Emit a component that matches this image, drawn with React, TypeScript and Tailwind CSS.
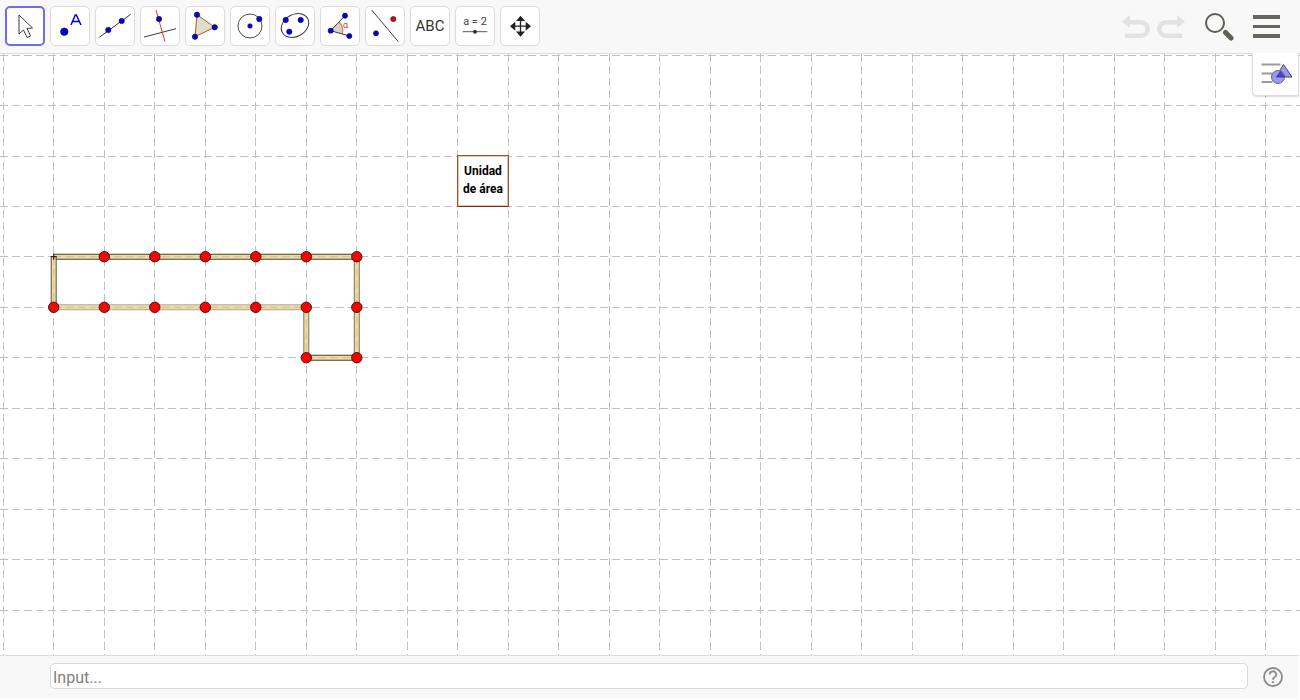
import type { ReactNode } from "react";

const FONT = "font-['Roboto','Liberation_Sans',sans-serif]";

// grid lines of the graphics view, snapped to whole pixels like the applet does
const GRID_X = Array.from({ length: 26 }, (_, i) => Math.floor(3 + i * 50.5) + 0.5);
const GRID_Y = Array.from({ length: 12 }, (_, i) => Math.floor(1.1 + i * 50.45) + 0.5);

const ROW_TOP = 202.7;
const ROW_MID = 253.3;
const ROW_LOW = 303.7;
const COLS = [53.7, 104.3, 154.8, 205.3, 255.8, 306.3, 356.8];

// red points of the match figure, in canvas coordinates
const POINTS: [number, number][] = [
  ...COLS.slice(1).map((x): [number, number] => [x, ROW_TOP]),
  ...COLS.map((x): [number, number] => [x, ROW_MID]),
  [COLS[5], ROW_LOW],
  [COLS[6], ROW_LOW],
];

const MATCHES: { x1: number; y1: number; x2: number; y2: number; edge: string }[] = [
  { x1: COLS[0], y1: ROW_TOP, x2: COLS[6], y2: ROW_TOP, edge: "#45423a" },
  { x1: COLS[0], y1: ROW_TOP, x2: COLS[0], y2: ROW_MID, edge: "#55524a" },
  { x1: COLS[0], y1: ROW_MID, x2: COLS[5], y2: ROW_MID, edge: "#a8a8a4" },
  { x1: COLS[6], y1: ROW_TOP, x2: COLS[6], y2: ROW_LOW, edge: "#77756e" },
  { x1: COLS[5], y1: ROW_MID, x2: COLS[5], y2: ROW_LOW, edge: "#77756e" },
  { x1: COLS[5], y1: ROW_LOW, x2: COLS[6], y2: ROW_LOW, edge: "#45423a" },
];

function Dot({ x, y, r = 3.5, fill = "#0000e0" }: { x: number; y: number; r?: number; fill?: string }) {
  return <circle cx={x} cy={y} r={r} fill={fill} stroke="#14143c" strokeWidth={0.6} />;
}

function ToolButton({ children, active }: { children: ReactNode; active?: boolean }) {
  return (
    <button
      className={
        active
          ? "flex h-10 w-10 items-center justify-center rounded-[5px] border-2 border-[#6c6cf5] bg-white"
          : "flex h-10 w-10 items-center justify-center rounded-[5px] border border-[#dcdcdc] bg-white"
      }
    >
      {children}
    </button>
  );
}

function Icon({ children }: { children: ReactNode }) {
  return (
    <svg width="40" height="40" viewBox="0 0 40 40" className="shrink-0">
      {children}
    </svg>
  );
}

function Toolbar() {
  return (
    <div className="flex h-[53px] shrink-0 items-start justify-between bg-[#f8f8f8] pl-[5px] pr-5 pt-1.5">
      <div className="flex gap-[5px]">
        <ToolButton active>
          <Icon>
            <path d="M14 9 L14 28 L18.5 24 L22 31.5 L25.5 30 L22 22.5 L27.5 22 Z" fill="#fff" stroke="#3c3c3c" strokeWidth={1} strokeLinejoin="round" />
          </Icon>
        </ToolButton>
        <ToolButton>
          <Icon>
            <Dot x={14.3} y={25.7} r={3.8} />
            <path d="M21 19 L25.3 9 L26.3 9 L31 19 M22.8 15.6 L29 15.6" fill="none" stroke="#0000e0" strokeWidth={1.5} />
          </Icon>
        </ToolButton>
        <ToolButton>
          <Icon>
            <path d="M4.3 31.3 L35.700 8.300" stroke="#3c3c3c" strokeWidth={1} />
            <Dot x={13.3} y={24} r={2.7} />
            <Dot x={26.7} y={15} r={2.7} />
          </Icon>
        </ToolButton>
        <ToolButton>
          <Icon>
            <path d="M4 31 L36 22.700" stroke="#3c3c3c" strokeWidth={1} />
            <path d="M16 4 L25 35.700" stroke="#f03030" strokeWidth={1} />
            <Dot x={19} y={13} r={2.7} />
          </Icon>
        </ToolButton>
        <ToolButton>
          <Icon>
            <path d="M12 8.700 L29.700 21.300 L10 30.700 Z" fill="#e2dccb" stroke="#a55a28" strokeWidth={1} />
            <Dot x={12} y={8.7} r={2.7} />
            <Dot x={29.7} y={21.3} r={2.7} />
            <Dot x={10} y={30.7} r={2.7} />
          </Icon>
        </ToolButton>
        <ToolButton>
          <Icon>
            <circle cx={20} cy={20} r={12} fill="none" stroke="#4a4a4a" strokeWidth={1} />
            <Dot x={20} y={20} r={2.3} />
            <Dot x={29.3} y={13} r={2.7} />
          </Icon>
        </ToolButton>
        <ToolButton>
          <Icon>
            <ellipse cx={20} cy={19.5} rx={14.5} ry={11} transform="rotate(-30 20 19.5)" fill="none" stroke="#3c3c3c" strokeWidth={1} />
            <Dot x={10.7} y={14} r={2.7} />
            <Dot x={25.7} y={14} r={2.7} />
            <Dot x={14.3} y={25.7} r={2.7} />
          </Icon>
        </ToolButton>
        <ToolButton>
          <Icon>
            <path d="M10.700 24.700 L19 16 A12 12 0 0 1 22.200 28 Z" fill="#d8d2c8" />
            <path d="M19 16 A12 12 0 0 1 22.200 28" fill="none" stroke="#e8705a" strokeWidth={1.2} />
            <path d="M25 9.700 L10.700 24.700 L29.300 30" fill="none" stroke="#3c3c3c" strokeWidth={1} />
            <Dot x={25} y={9.7} r={2.6} />
            <Dot x={10.7} y={24.7} r={2.6} />
            <Dot x={29.3} y={30} r={2.6} />
            <text x={23} y={22} fontSize={9} fill="#e03030" fontFamily="Roboto, sans-serif">α</text>
          </Icon>
        </ToolButton>
        <ToolButton>
          <Icon>
            <path d="M6.700 4 L33.300 35.700" stroke="#3c3c3c" strokeWidth={1} />
            <Dot x={28.3} y={13} r={2.6} fill="#e00000" />
            <Dot x={11} y={27.3} r={2.6} />
          </Icon>
        </ToolButton>
        <ToolButton>
          <span className={`${FONT} text-[15px] leading-none text-[#333]`}>ABC</span>
        </ToolButton>
        <ToolButton>
          <Icon>
            <text x={20} y={19} textAnchor="middle" fontSize={11} fill="#444" fontFamily="Roboto, sans-serif">a = 2</text>
            <path d="M7.700 25.700 L32.300 25.700" stroke="#555" strokeWidth={1} />
            <circle cx={20} cy={25.7} r={2} fill="#333" />
          </Icon>
        </ToolButton>
        <ToolButton>
          <Icon>
            <path d="M20.500 12 L20.500 28 M12 20.200 L29 20.200" stroke="#222" strokeWidth={1.3} />
            <path d="M20.500 9.700 L25 15 L16 15 Z M20.500 30.700 L25 25.400 L16 25.400 Z M10 20.200 L15.300 15.700 L15.300 24.700 Z M31 20.200 L25.700 15.700 L25.700 24.700 Z" fill="#222" />
          </Icon>
        </ToolButton>
      </div>
      <div className="flex items-start pt-[7px]">
        <svg width="29" height="26" viewBox="0 0 29 26" className="mr-[7px] mt-px">
          <path d="M1 8 L9 1 L9 6 L20 6 A9 9 0 0 1 20 24 L4 24 L4 19.500 L20 19.500 A4.500 4.500 0 0 0 20 10.500 L9 10.500 L9 14 Z" fill="#e2e2e2" />
        </svg>
        <svg width="29" height="26" viewBox="0 0 29 26" className="mr-[18px] mt-px">
          <path d="M28 8 L20 1 L20 6 L9 6 A9 9 0 0 0 9 24 L25 24 L25 19.500 L9 19.500 A4.500 4.500 0 0 1 9 10.500 L20 10.500 L20 14 Z" fill="#e2e2e2" />
        </svg>
        <svg width="30" height="30" viewBox="0 0 30 30" className="mr-[19px]">
          <circle cx={11} cy={10} r={9} fill="none" stroke="#5f5f58" strokeWidth={2} />
          <path d="M21.500 19.500 L27 25" stroke="#5f5f58" strokeWidth={5} strokeLinecap="round" />
        </svg>
        <div className="mt-0.5 flex w-[27px] flex-col gap-[6px]">
          <div className="h-[3.5px] bg-[#66665e]" />
          <div className="h-[3.5px] bg-[#66665e]" />
          <div className="h-[3.5px] bg-[#66665e]" />
        </div>
      </div>
    </div>
  );
}

function GraphicsView() {
  return (
    <div className="relative min-h-0 flex-1 border-t border-[#dcdcdc] bg-white">
      <svg className="h-full w-full" width="1300" height="602">
        {GRID_X.map((x) => (
          <line key={x} x1={x} y1={0} x2={x} y2={602} stroke="#c0c0c0" strokeWidth={1} strokeDasharray="8 4" />
        ))}
        {GRID_Y.map((y) => (
          <line key={y} x1={0} y1={y} x2={1300} y2={y} stroke="#c0c0c0" strokeWidth={1} strokeDasharray="8 4" />
        ))}
        {MATCHES.map((m) => (
          <g key={`${m.x1}-${m.y1}-${m.x2}-${m.y2}`}>
            <line x1={m.x1} y1={m.y1} x2={m.x2} y2={m.y2} stroke={m.edge} strokeWidth={6} />
            <line x1={m.x1} y1={m.y1} x2={m.x2} y2={m.y2} stroke="#f0dca0" strokeWidth={4} />
            <line x1={m.x1} y1={m.y1} x2={m.x2} y2={m.y2} stroke="#d4c088" strokeWidth={1} strokeDasharray="8 4" />
          </g>
        ))}
        <path d={`M${COLS[0] - 3} ${ROW_TOP} h6 M${COLS[0]} ${ROW_TOP - 3} v6`} stroke="#2a2620" strokeWidth={1.2} />
        {POINTS.map(([x, y]) => (
          <circle key={`${x}-${y}`} cx={x} cy={y} r={5.2} fill="#ff0000" stroke="#3a1a1a" strokeWidth={1} />
        ))}
      </svg>

      {/* Text box placed on the canvas */}
      <div className={`${FONT} absolute left-[457px] top-[101px] flex h-[52px] w-[52px] items-center justify-center border border-[#a0562c] border-b-[#8b2c10] bg-white pb-0.5 text-center text-xs font-bold leading-[18px] text-black shadow-[inset_0_0_0_1px_rgba(160,86,44,0.35)]`}>
        <span>
          Unidad
          <br />
          de área
        </span>
      </div>

      {/* Style bar toggle */}
      <div className="absolute -top-px right-px flex h-[43px] w-[47px] items-center justify-center rounded-bl-[5px] border-b border-l border-r border-[#dcdcdc] bg-white shadow-[0_1px_2px_rgba(0,0,0,0.15)]">
        <svg width="34" height="26" viewBox="0 0 34 26">
          <path d="M2.500 3.500 L21.500 3.500 M2.500 12.500 L13.500 12.500 M2.500 21 L13.500 21" stroke="#9a9a9a" strokeWidth={2.2} />
          <path d="M24.500 3.500 L33 16 L16.500 16 Z" fill="#9999f5" stroke="#44445a" strokeWidth={1} />
          <circle cx={19} cy={16} r={6.5} fill="#9999f5" stroke="#66667f" strokeWidth={1} />
          <path d="M21.500 10.500 L25.500 16 L17.500 16 Z" fill="#4848d8" stroke="#333366" strokeWidth={0.8} />
        </svg>
      </div>
    </div>
  );
}

function InputBar() {
  return (
    <div className="mb-px mr-px flex h-11 shrink-0 items-start border-t border-[#dcdcdc] bg-[#f8f8f8] pt-[7px]">
      <div className={`${FONT} ml-[50px] flex h-[26px] w-[1198px] items-center rounded-[5px] border border-[#d8d8d8] bg-white pl-[2px] pt-[3px] text-base text-[#808080]`}>
        Input...
      </div>
      <svg width="22" height="22" viewBox="0 0 22 22" className="ml-[14px] mt-[3px]">
        <circle cx={11} cy={11} r={9} fill="none" stroke="#8a8a8a" strokeWidth={1.8} />
        <path d="M7.800 8.500 A3.200 3.200 0 1 1 12.500 11.300 C11.300 12 11 12.500 11 13.700" fill="none" stroke="#8a8a8a" strokeWidth={1.8} />
        <circle cx={11} cy={16.2} r={1.1} fill="#8a8a8a" />
      </svg>
    </div>
  );
}

export default function App() {
  return (
    <div className="flex h-[700px] w-[1300px] flex-col overflow-hidden bg-white">
      <Toolbar />
      <GraphicsView />
      <InputBar />
    </div>
  );
}
